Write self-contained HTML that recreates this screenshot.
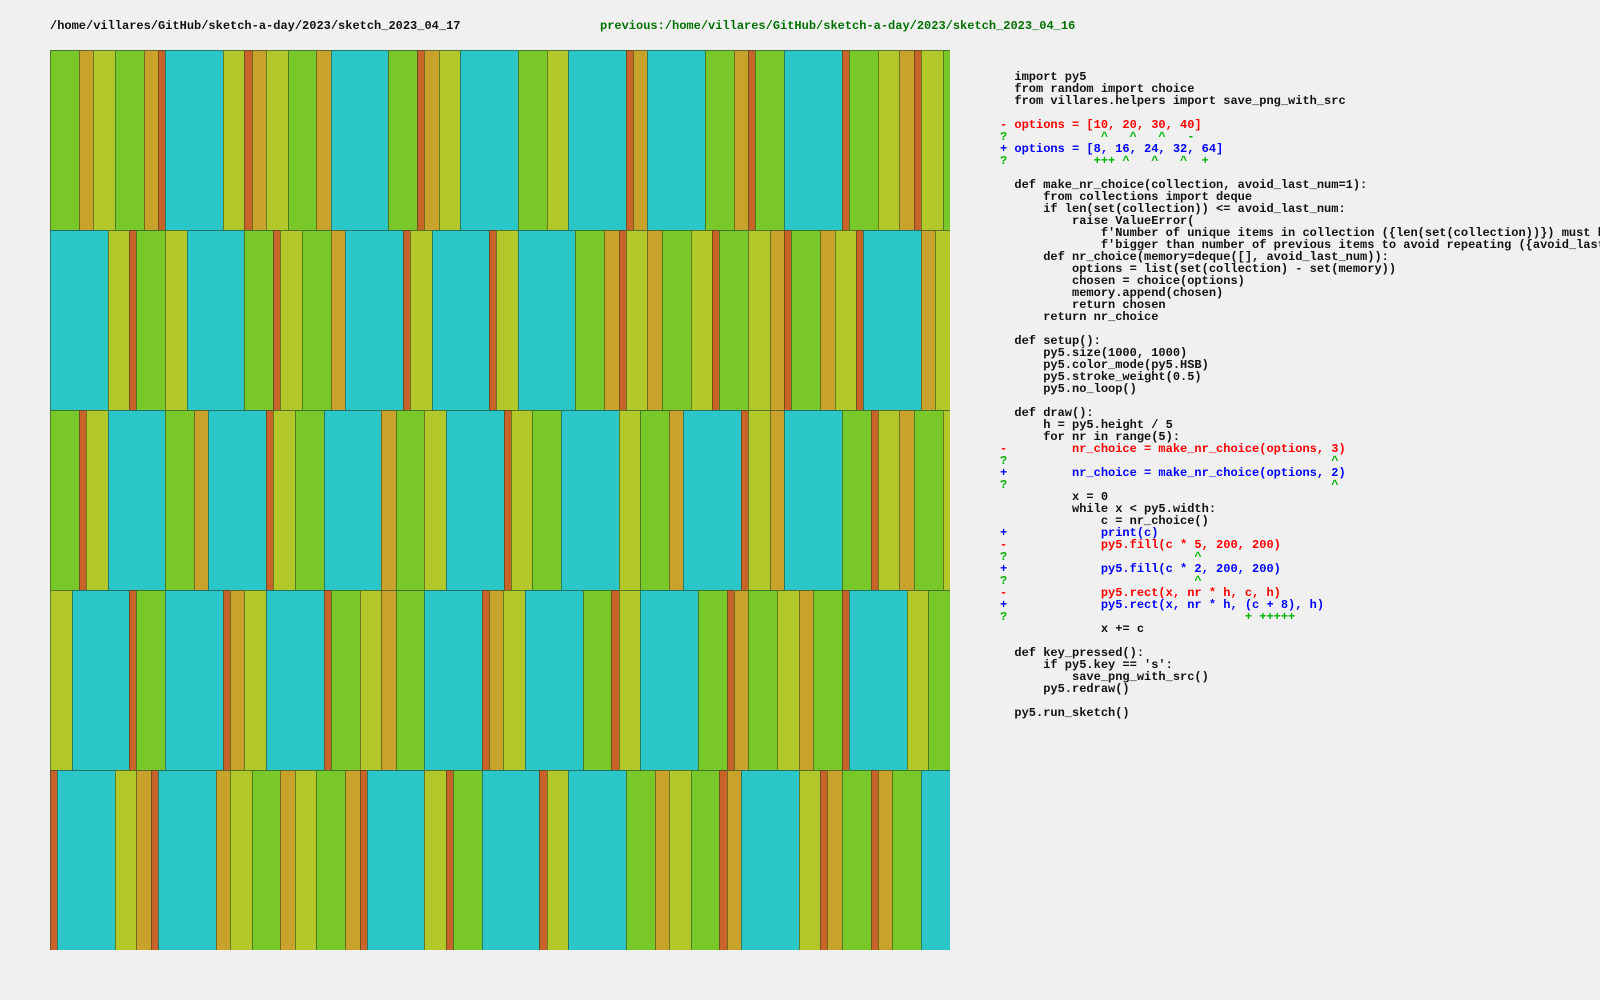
<!DOCTYPE html>
<html><head><meta charset="utf-8"><style>
html,body{margin:0;padding:0;width:1600px;height:1000px;overflow:hidden;background:#f0f0f0;}
.h{position:absolute;top:18px;font:bold 12px/16px "Liberation Mono",monospace;color:#111;white-space:pre;}
#cv{position:absolute;left:50px;top:50px;width:900px;height:900px;overflow:hidden;}
.r{display:flex;height:180px;width:1000px;}
.r i{display:block;height:180px;flex:none;box-sizing:border-box;border-left:1px solid rgba(40,60,20,.55);border-top:1px solid rgba(30,60,40,.6);}
i.R{width:7.2px;background:#c8642a}
i.G{width:14.4px;background:#c8a22a}
i.Y{width:21.6px;background:#b2c82a}
i.N{width:28.8px;background:#78c82a}
i.C{width:57.6px;background:#2ac6c8}
pre{position:absolute;left:1000px;top:71px;margin:0;font:bold 12px/12px "Liberation Mono",monospace;color:#111;}
.m{color:#ff0000}.p{color:#0000ff}.q{color:#00b400}
</style></head><body>
<div class="h" style="left:50px">/home/villares/GitHub/sketch-a-day/2023/sketch_2023_04_17</div>
<div class="h" style="left:600px;color:#007000">previous:/home/villares/GitHub/sketch-a-day/2023/sketch_2023_04_16</div>
<div id="cv">
<div class="r"><i class="N"></i><i class="G"></i><i class="Y"></i><i class="N"></i><i class="G"></i><i class="R"></i><i class="C"></i><i class="Y"></i><i class="R"></i><i class="G"></i><i class="Y"></i><i class="N"></i><i class="G"></i><i class="C"></i><i class="N"></i><i class="R"></i><i class="G"></i><i class="Y"></i><i class="C"></i><i class="N"></i><i class="Y"></i><i class="C"></i><i class="R"></i><i class="G"></i><i class="C"></i><i class="N"></i><i class="G"></i><i class="R"></i><i class="N"></i><i class="C"></i><i class="R"></i><i class="N"></i><i class="Y"></i><i class="G"></i><i class="R"></i><i class="Y"></i><i class="N"></i><i class="C"></i></div>
<div class="r"><i class="C"></i><i class="Y"></i><i class="R"></i><i class="N"></i><i class="Y"></i><i class="C"></i><i class="N"></i><i class="R"></i><i class="Y"></i><i class="N"></i><i class="G"></i><i class="C"></i><i class="R"></i><i class="Y"></i><i class="C"></i><i class="R"></i><i class="Y"></i><i class="C"></i><i class="N"></i><i class="G"></i><i class="R"></i><i class="Y"></i><i class="G"></i><i class="N"></i><i class="Y"></i><i class="R"></i><i class="N"></i><i class="Y"></i><i class="G"></i><i class="R"></i><i class="N"></i><i class="G"></i><i class="Y"></i><i class="R"></i><i class="C"></i><i class="G"></i><i class="Y"></i><i class="C"></i></div>
<div class="r"><i class="N"></i><i class="R"></i><i class="Y"></i><i class="C"></i><i class="N"></i><i class="G"></i><i class="C"></i><i class="R"></i><i class="Y"></i><i class="N"></i><i class="C"></i><i class="G"></i><i class="N"></i><i class="Y"></i><i class="C"></i><i class="R"></i><i class="Y"></i><i class="N"></i><i class="C"></i><i class="Y"></i><i class="N"></i><i class="G"></i><i class="C"></i><i class="R"></i><i class="Y"></i><i class="G"></i><i class="C"></i><i class="N"></i><i class="R"></i><i class="Y"></i><i class="G"></i><i class="N"></i><i class="Y"></i><i class="C"></i></div>
<div class="r"><i class="Y"></i><i class="C"></i><i class="R"></i><i class="N"></i><i class="C"></i><i class="R"></i><i class="G"></i><i class="Y"></i><i class="C"></i><i class="R"></i><i class="N"></i><i class="Y"></i><i class="G"></i><i class="N"></i><i class="C"></i><i class="R"></i><i class="G"></i><i class="Y"></i><i class="C"></i><i class="N"></i><i class="R"></i><i class="Y"></i><i class="C"></i><i class="N"></i><i class="R"></i><i class="G"></i><i class="N"></i><i class="Y"></i><i class="G"></i><i class="N"></i><i class="R"></i><i class="C"></i><i class="Y"></i><i class="N"></i><i class="C"></i></div>
<div class="r"><i class="R"></i><i class="C"></i><i class="Y"></i><i class="G"></i><i class="R"></i><i class="C"></i><i class="G"></i><i class="Y"></i><i class="N"></i><i class="G"></i><i class="Y"></i><i class="N"></i><i class="G"></i><i class="R"></i><i class="C"></i><i class="Y"></i><i class="R"></i><i class="N"></i><i class="C"></i><i class="R"></i><i class="Y"></i><i class="C"></i><i class="N"></i><i class="G"></i><i class="Y"></i><i class="N"></i><i class="R"></i><i class="G"></i><i class="C"></i><i class="Y"></i><i class="R"></i><i class="G"></i><i class="N"></i><i class="R"></i><i class="G"></i><i class="N"></i><i class="C"></i><i class="C"></i></div>
</div>
<pre>  import py5
  from random import choice
  from villares.helpers import save_png_with_src

<span class="m">- options = [10, 20, 30, 40]</span>
<span class="q">?             ^   ^   ^   -</span>
<span class="p">+ options = [8, 16, 24, 32, 64]</span>
<span class="q">?            +++ ^   ^   ^  +</span>

  def make_nr_choice(collection, avoid_last_num=1):
      from collections import deque
      if len(set(collection)) &lt;= avoid_last_num:
          raise ValueError(
              f'Number of unique items in collection ({len(set(collection))}) must be '
              f'bigger than number of previous items to avoid repeating ({avoid_last_num}).')
      def nr_choice(memory=deque([], avoid_last_num)):
          options = list(set(collection) - set(memory))
          chosen = choice(options)
          memory.append(chosen)
          return chosen
      return nr_choice

  def setup():
      py5.size(1000, 1000)
      py5.color_mode(py5.HSB)
      py5.stroke_weight(0.5)
      py5.no_loop()

  def draw():
      h = py5.height / 5
      for nr in range(5):
<span class="m">-         nr_choice = make_nr_choice(options, 3)</span>
<span class="q">?                                             ^</span>
<span class="p">+         nr_choice = make_nr_choice(options, 2)</span>
<span class="q">?                                             ^</span>
          x = 0
          while x &lt; py5.width:
              c = nr_choice()
<span class="p">+             print(c)</span>
<span class="m">-             py5.fill(c * 5, 200, 200)</span>
<span class="q">?                          ^</span>
<span class="p">+             py5.fill(c * 2, 200, 200)</span>
<span class="q">?                          ^</span>
<span class="m">-             py5.rect(x, nr * h, c, h)</span>
<span class="p">+             py5.rect(x, nr * h, (c + 8), h)</span>
<span class="q">?                                 + +++++</span>
              x += c

  def key_pressed():
      if py5.key == 's':
          save_png_with_src()
      py5.redraw()

  py5.run_sketch()
</pre>
</body></html>
